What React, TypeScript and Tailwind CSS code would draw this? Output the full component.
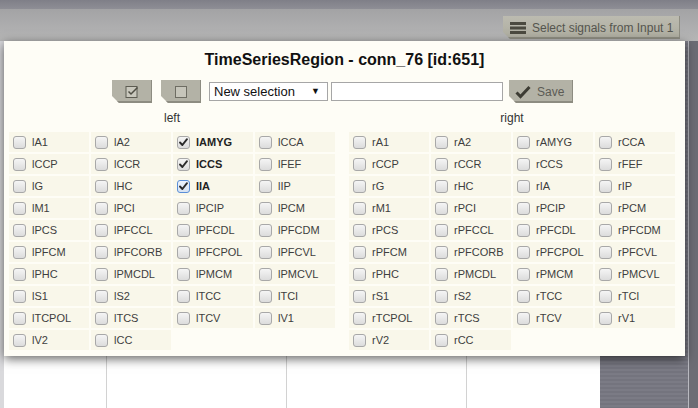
import React from 'react'

const LEFT = [
  'lA1', 'lA2', 'lAMYG', 'lCCA',
  'lCCP', 'lCCR', 'lCCS', 'lFEF',
  'lG', 'lHC', 'lIA', 'lIP',
  'lM1', 'lPCI', 'lPCIP', 'lPCM',
  'lPCS', 'lPFCCL', 'lPFCDL', 'lPFCDM',
  'lPFCM', 'lPFCORB', 'lPFCPOL', 'lPFCVL',
  'lPHC', 'lPMCDL', 'lPMCM', 'lPMCVL',
  'lS1', 'lS2', 'lTCC', 'lTCI',
  'lTCPOL', 'lTCS', 'lTCV', 'lV1',
  'lV2', 'lCC',
]

const RIGHT = LEFT.map(n => 'r' + n.slice(1))

const CHECKED = new Set(['lAMYG', 'lCCS', 'lIA'])
const FOCUSED = 'lIA'

const notch = '[clip-path:polygon(0_0,100%_0,100%_100%,7px_100%,0_calc(100%_-_7px))]'

function CheckBox({ checked, focused }: { checked: boolean; focused: boolean }) {
  return (
    <div
      className={`w-[13px] h-[13px] shrink-0 rounded-[3px] border flex items-center justify-center ${
        focused
          ? 'border-[#5a8ed8] bg-gradient-to-b from-[#eef4fc] to-[#d6e2f2]'
          : 'border-[#a8a8a8] bg-gradient-to-b from-[#f5f5f5] to-[#dcdcdc]'
      }`}
    >
      {checked && (
        <svg width="11" height="11" viewBox="0 0 11 11">
          <path d="M2 5.5 L4.4 8 L9 2.2" fill="none" stroke="#2b2b2b" strokeWidth="1.9" strokeLinecap="round" strokeLinejoin="round" />
        </svg>
      )}
    </div>
  )
}

function Group({ title, names }: { title: string; names: string[] }) {
  return (
    <div className="flex flex-col w-[326px]">
      <div className="text-center text-[12px] leading-[14px] text-[#333]">{title}</div>
      <div className="mt-[7px] grid grid-cols-[repeat(4,80px)] gap-[2px]">
        {names.map(n => {
          const on = CHECKED.has(n)
          return (
            <div key={n} className="h-[20px] bg-[#f9f7ea] flex items-center pl-[4px] gap-[6px]">
              <CheckBox checked={on} focused={n === FOCUSED} />
              <span className={`text-[11px] leading-none ${on ? 'font-bold text-[#222]' : 'text-[#3e3e3e]'}`}>{n}</span>
            </div>
          )
        })}
      </div>
    </div>
  )
}

export default function App() {
  return (
    <div className="relative w-[698px] h-[408px] overflow-hidden bg-white font-['Liberation_Sans',Arial,sans-serif]">
      {/* page behind the dialog */}
      <div className="h-[41px] flex flex-col">
        <div className="h-[9px] bg-gradient-to-b from-[#7f7f88] to-[#8e8e95]" />
        <div className="flex-1 bg-gradient-to-b from-[#a3a3a5] to-[#b6b6b6] flex justify-end pr-[18px] pt-[7px]">
          <div className={`w-[177px] h-[23px] bg-gradient-to-b from-[#bcbbb0] to-[#adac9f] shadow-[inset_-1px_-2px_0_#8e8d82] flex items-center pl-[7px] gap-[6px] ${notch}`}>
            <svg width="16" height="12" viewBox="0 0 16 12">
              <rect x="0" y="0" width="16" height="3" fill="#4b4a40" />
              <rect x="0" y="4.5" width="16" height="3" fill="#4b4a40" />
              <rect x="0" y="9" width="16" height="3" fill="#4b4a40" />
            </svg>
            <span className="text-[12px] text-[#55554f]">Select signals from Input 1</span>
          </div>
        </div>
      </div>
      <div className="flex h-[367px]">
        <div className="w-[4px] bg-[#d9d9dc]" />
        <div className="w-[102px]" />
        <div className="w-[180px] border-l border-[#d2d2d2]" />
        <div className="w-[180px] border-l border-[#d2d2d2]" />
        <div className="w-[134px] border-l border-[#d2d2d2]" />
        <div className="w-[88px] bg-[repeating-linear-gradient(to_bottom,#7b7b85_0px,#7b7b85_2px,#74747e_2px,#74747e_4px)]" />
        <div className="w-[1px] bg-[#b9b9c0]" />
        <div className="flex-1 bg-[#6c6c74]" />
      </div>

      {/* dialog */}
      <div className="absolute left-[4px] top-[41px] w-[681px] h-[315px] bg-[#fefdf6] shadow-[0_3px_10px_rgba(0,0,0,0.6)] flex flex-col">
        <div className="pt-[10px] text-center text-[16px] leading-[18px] font-bold text-[#111]">
          TimeSeriesRegion - conn_76 [id:651]
        </div>

        <div className="mt-[11px] flex items-center pl-[108px] h-[23px]">
          <div className={`w-[40px] h-[23px] bg-[#b3b2a6] shadow-[inset_-1px_-2px_0_#8d8c81] flex items-center justify-center ${notch}`}>
            <svg width="15" height="14" viewBox="0 0 15 14">
              <rect x="1" y="1.5" width="11" height="11" fill="#c9c8bd" stroke="#5d5c52" strokeWidth="1" />
              <path d="M3.5 6.5 L6 9 L12.5 2.5" fill="none" stroke="#4f4e44" strokeWidth="1.5" />
            </svg>
          </div>
          <div className={`ml-[9px] w-[40px] h-[23px] bg-[#b3b2a6] shadow-[inset_-1px_-2px_0_#8d8c81] flex items-center justify-center ${notch}`}>
            <div className="w-[12px] h-[12px] border border-[#6e6d63] bg-[#c6c5ba]" />
          </div>
          <div className="ml-[8px] w-[119px] h-[19px] bg-white border border-[#a6a6a6] flex items-center pl-[4px] pr-[7px]">
            <span className="flex-1 text-[13px] leading-none text-[#111]">New selection</span>
            <span className="text-[9px] leading-none text-[#111]">▼</span>
          </div>
          <div className="ml-[3px] w-[172px] h-[19px] bg-white border border-[#a6a6a6]" />
          <div className={`ml-[6px] w-[64px] h-[23px] bg-[#b3b2a6] shadow-[inset_-1px_-2px_0_#8d8c81] flex items-center pl-[6px] gap-[6px] ${notch}`}>
            <svg width="16" height="14" viewBox="0 0 16 14">
              <path d="M1.5 7.5 L5.5 11.5 L14.5 2" fill="none" stroke="#3d3c34" strokeWidth="3" />
            </svg>
            <span className="text-[12px] text-[#5c5b55]">Save</span>
          </div>
        </div>

        <div className="mt-[8px] flex pl-[5px] gap-[14px]">
          <Group title="left" names={LEFT} />
          <Group title="right" names={RIGHT} />
        </div>
      </div>
    </div>
  )
}
